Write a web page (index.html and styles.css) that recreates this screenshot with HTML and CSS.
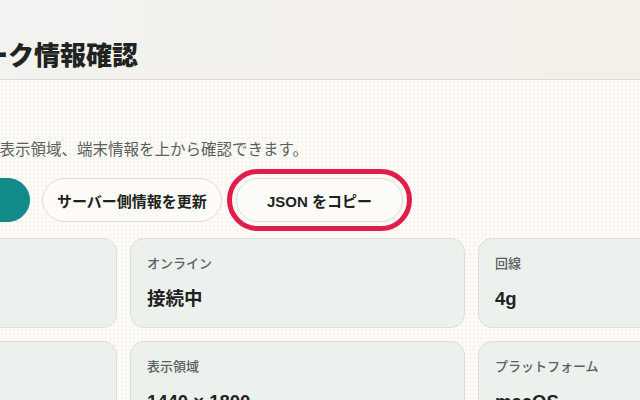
FILE: index.html
```html
<!DOCTYPE html>
<html lang="ja">
<head>
<meta charset="utf-8">
<title>ネットワーク情報確認</title>
<link rel="stylesheet" href="styles.css">
</head>
<body>
<header class="topbar">
  <div class="wrap">
    <h1 class="title"><span class="mark"></span>端末ネットワーク情報確認</h1>
  </div>
</header>
<main class="wrap main">
  <p class="lead">通信状態、回線、接続先、速度、表示領域、端末情報を上から確認できます。</p>
  <div class="actions">
    <button class="btn btn-primary">ネットワーク情報を再取得</button>
    <button class="btn btn-tight">サーバー側情報を更新</button>
    <button class="btn btn-focus">JSON をコピー</button>
  </div>
  <section class="grid">
    <div class="card"><div class="label">ブラウザ</div><div class="value">Chrome</div></div>
    <div class="card"><div class="label">オンライン</div><div class="value">接続中</div></div>
    <div class="card"><div class="label">回線</div><div class="value">4g</div></div>
    <div class="card"><div class="label">言語</div><div class="value">ja-JP</div></div>
    <div class="card"><div class="label">表示領域</div><div class="value">1440 × 1800</div></div>
    <div class="card"><div class="label">プラットフォーム</div><div class="value">macOS</div></div>
  </section>
</main>
</body>
</html>
```

FILE: styles.css
```css
* { box-sizing: border-box; }
html, body { margin: 0; padding: 0; }
body {
  width: 640px;
  height: 400px;
  overflow: hidden;
  font-family: "Liberation Sans", "Noto Sans CJK JP", sans-serif;
  background-color: #fcfbf7;
  background-image: radial-gradient(#f6f3ea 0.7px, transparent 0.9px);
  background-size: 4px 4px;
  color: #1e2220;
}
.wrap {
  margin-left: -218px;
  width: 1030px;
}
.topbar {
  height: 80px;
  background: linear-gradient(90deg, #f2f2f0 0%, #f3f1ed 40%, #f5efe9 100%);
  border-bottom: 1px solid #dddad4;
  padding-top: 38px;
}
.title {
  margin: 0;
  display: flex;
  align-items: center;
  gap: 12px;
  font-size: 26px;
  line-height: 36px;
  font-weight: 900;
  color: #1f2321;
  white-space: nowrap;
}
.mark {
  width: 32px;
  height: 32px;
  border-radius: 9px;
  background: #138a8a;
}
.main { padding-top: 59px; }
.lead {
  margin: 0 0 0 -15px;
  font-size: 15.5px;
  line-height: 22px;
  color: #5a605d;
  white-space: nowrap;
}
.actions {
  margin-top: 17px;
  display: flex;
  gap: 12px;
}
.btn {
  height: 44px;
  padding: 0 30px;
  border-radius: 22px;
  border: 1px solid #dedbd4;
  background: #fdfcf8;
  font-family: inherit;
  font-size: 15px;
  font-weight: 700;
  color: #1e2220;
  white-space: nowrap;
}
.btn-primary {
  background: #138a8a;
  border-color: #138a8a;
  color: #fff;
  padding: 0 33px;
}
.btn-tight { padding: 0 14px; }
.btn-focus {
  margin-left: 2px;
  outline: 5px solid #e11d4b;
  outline-offset: 4px;
}
.grid {
  margin-top: 16px;
  display: grid;
  grid-template-columns: repeat(3, 335px);
  gap: 13px;
}
.card {
  background: #edf1ee;
  border: 1px solid #e0ddd5;
  border-radius: 14px;
  padding: 15px 16px;
}
.label {
  font-size: 13px;
  line-height: 20px;
  font-weight: 500;
  color: #5a605d;
}
.value {
  margin-top: 12px;
  font-size: 18.5px;
  line-height: 26px;
  font-weight: 700;
  color: #1e2220;
}
```
